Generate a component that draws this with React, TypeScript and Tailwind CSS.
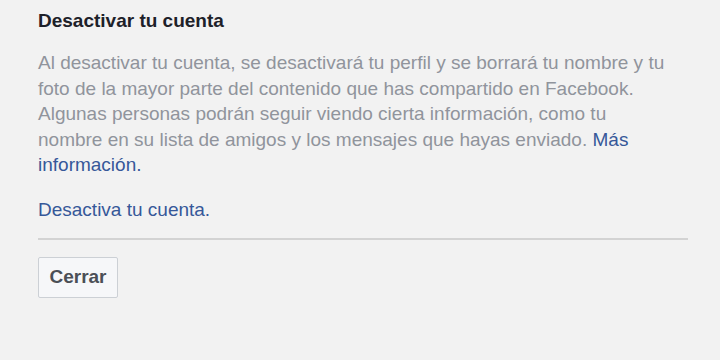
export default function App() {
  return (
    <div
      className="h-[360px] w-[720px] bg-[#f2f2f2] pl-[38px] pr-[32px] pt-[10px]"
      style={{ fontFamily: '"Liberation Sans", Arial, sans-serif' }}
    >
      <h2 className="text-[19px] font-bold leading-[22px] text-[#1d2129]">Desactivar tu cuenta</h2>
      <p className="mt-[18px] whitespace-nowrap text-[19px] leading-[25.5px] text-[#90949c]">
        Al desactivar tu cuenta, se desactivará tu perfil y se borrará tu nombre y tu
        <br />
        foto de la mayor parte del contenido que has compartido en Facebook.
        <br />
        Algunas personas podrán seguir viendo cierta información, como tu
        <br />
        nombre en su lista de amigos y los mensajes que hayas enviado.{" "}
        <a className="text-[#365899]">Más</a>
        <br />
        <a className="text-[#365899]">información.</a>
      </p>
      <a className="mt-[19px] block text-[19px] leading-[25.5px] text-[#365899]">Desactiva tu cuenta.</a>
      <div className="mt-[16px] h-[2px] w-[650px] bg-[#d3d3d3]" />
      <button className="mt-[17px] h-[41px] w-[80px] rounded-[2px] border border-[#ccd0d5] bg-[#f6f7f9] text-[19px] font-bold text-[#4b4f56]">
        Cerrar
      </button>
    </div>
  )
}
